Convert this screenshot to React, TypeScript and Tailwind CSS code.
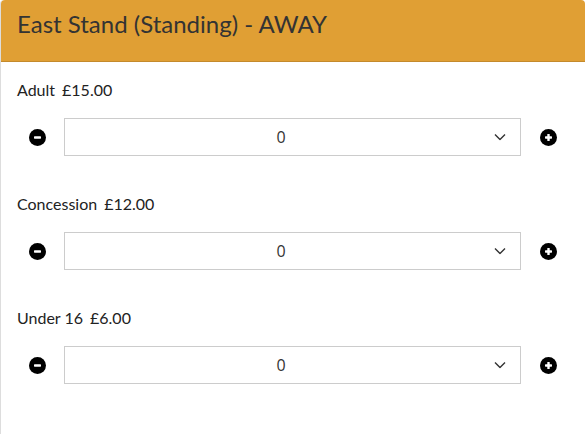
import React, { useState } from "react";

type Ticket = {
  id: string;
  label: string;
  price: string;
};

const tickets: Ticket[] = [
  { id: "adult", label: "Adult", price: "£15.00" },
  { id: "concession", label: "Concession", price: "£12.00" },
  { id: "under16", label: "Under 16", price: "£6.00" },
];

const MinusIcon = () => (
  <svg width="17" height="17" viewBox="0 0 17 17">
    <circle cx="8.5" cy="8.5" r="8.5" fill="#000" />
    <rect x="5" y="7.3" width="7" height="2.4" rx="0.6" fill="#fff" />
  </svg>
);

const PlusIcon = () => (
  <svg width="17" height="17" viewBox="0 0 17 17">
    <circle cx="8.5" cy="8.5" r="8.5" fill="#000" />
    <rect x="5" y="7.3" width="7" height="2.4" rx="0.6" fill="#fff" />
    <rect x="7.3" y="5" width="2.4" height="7" rx="0.6" fill="#fff" />
  </svg>
);

const Chevron = () => (
  <svg width="12" height="7" viewBox="0 0 12 7" className="pointer-events-none">
    <path d="M1 1l5 5 5-5" fill="none" stroke="#333" strokeWidth="1.4" />
  </svg>
);

const TicketRow = ({ ticket }: { ticket: Ticket }) => {
  const [qty, setQty] = useState(0);

  return (
    <div className="mb-[39px]">
      <div className="px-[16px] text-[16px] leading-[18px] text-[#222]">
        <span>{ticket.label}</span>
        <span className="ml-[7px]">{ticket.price}</span>
      </div>

      <div className="mt-[19px] grid grid-cols-[40px_1fr_40px] items-center gap-[7px] pl-[16px] pr-[17px]">
        <button
          className="flex items-center justify-center pl-[1px]"
          onClick={() => setQty((q) => Math.max(0, q - 1))}
        >
          <MinusIcon />
        </button>

        <div className="relative">
          <select
            value={qty}
            onChange={(e) => setQty(Number(e.target.value))}
            className="h-[38px] w-full appearance-none border border-[#ccc] bg-white pl-3 pr-[35px] text-center text-[16px] text-[#333] outline-none [text-align-last:center] [font-family:'Open_Sans',sans-serif]"
          >
            {Array.from({ length: 11 }, (_, i) => (
              <option key={i} value={i}>
                {i}
              </option>
            ))}
          </select>
          <div className="pointer-events-none absolute right-[15px] top-1/2 -translate-y-1/2">
            <Chevron />
          </div>
        </div>

        <button
          className="flex items-center justify-center pl-[1px] pt-[1px]"
          onClick={() => setQty((q) => Math.min(10, q + 1))}
        >
          <PlusIcon />
        </button>
      </div>
    </div>
  );
};

export default function App() {
  return (
    <div className="h-[434px] w-[585px] overflow-hidden bg-white [font-family:Lato,'Liberation_Sans',sans-serif]">
      <div className="h-[440px] rounded-[4px] border-l border-b border-[#ddd] bg-white">
        <div className="h-[62px] rounded-t-[4px] border-b border-[#c48a2c] bg-[#e09f34] px-[16px] pt-[10px]">
          <h2 className="text-[24px] leading-[1.2] text-[#333]">
            East Stand (Standing) - AWAY
          </h2>
        </div>

        <div className="pt-[19px]">
          {tickets.map((t) => (
            <TicketRow key={t.id} ticket={t} />
          ))}
        </div>
      </div>
    </div>
  );
}
